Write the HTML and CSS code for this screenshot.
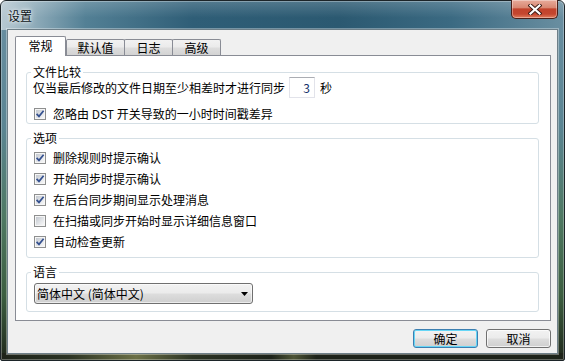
FILE: index.html
```html
<!DOCTYPE html>
<html lang="zh-CN">
<head>
<meta charset="utf-8">
<title>设置</title>
<link rel="stylesheet" href="styles.css">
</head>
<body>
<div class="window">
  <div class="titlebar">
    <span class="title">设置</span>
    <div class="close">
      <svg width="14" height="11" viewBox="0 0 14 11">
        <path d="M2.5 1.5 L11.5 9.5 M11.5 1.5 L2.5 9.5" stroke="#3a1a14" stroke-width="4" stroke-linecap="square" fill="none"/>
        <path d="M2.5 1.5 L11.5 9.5 M11.5 1.5 L2.5 9.5" stroke="#ffffff" stroke-width="2.2" stroke-linecap="square" fill="none"/>
      </svg>
    </div>
  </div>
  <div class="client">
    <div class="tabs">
      <div class="tab active">常规</div>
      <div class="tab t2">默认值</div>
      <div class="tab t3">日志</div>
      <div class="tab t4">高级</div>
    </div>
    <div class="panel">
      <fieldset class="group g1">
        <legend>文件比较</legend>
        <div class="row first">仅当最后修改的文件日期至少相差时才进行同步<span class="num">3</span>秒</div>
        <div class="check c1"><span class="box on"><svg width="8" height="8" viewBox="0 0 8 8"><path d="M0.6 3.8 L3 6.4 L7.6 0.8" stroke="#34508f" stroke-width="1.7" fill="none"/></svg></span>忽略由 DST 开关导致的一小时时间戳差异</div>
      </fieldset>
      <fieldset class="group g2">
        <legend>选项</legend>
        <div class="check first"><span class="box on"><svg width="8" height="8" viewBox="0 0 8 8"><path d="M0.6 3.8 L3 6.4 L7.6 0.8" stroke="#34508f" stroke-width="1.7" fill="none"/></svg></span>删除规则时提示确认</div>
        <div class="check"><span class="box on"><svg width="8" height="8" viewBox="0 0 8 8"><path d="M0.6 3.8 L3 6.4 L7.6 0.8" stroke="#34508f" stroke-width="1.7" fill="none"/></svg></span>开始同步时提示确认</div>
        <div class="check"><span class="box on"><svg width="8" height="8" viewBox="0 0 8 8"><path d="M0.6 3.8 L3 6.4 L7.6 0.8" stroke="#34508f" stroke-width="1.7" fill="none"/></svg></span>在后台同步期间显示处理消息</div>
        <div class="check"><span class="box"></span>在扫描或同步开始时显示详细信息窗口</div>
        <div class="check"><span class="box on"><svg width="8" height="8" viewBox="0 0 8 8"><path d="M0.6 3.8 L3 6.4 L7.6 0.8" stroke="#34508f" stroke-width="1.7" fill="none"/></svg></span>自动检查更新</div>
      </fieldset>
      <fieldset class="group g3">
        <legend>语言</legend>
        <div class="select">
          <span>简体中文 (简体中文)</span>
          <svg width="7" height="4" viewBox="0 0 7 4"><path d="M0 0 H7 L3.5 4 Z" fill="#000"/></svg>
        </div>
      </fieldset>
    </div>
    <div class="buttons">
      <div class="btn default">确定</div>
      <div class="btn">取消</div>
    </div>
  </div>
</div>
</body>
</html>
```

FILE: styles.css
```css
* { box-sizing: border-box; }
html, body { margin: 0; padding: 0; background: #ffffff; }
body {
  font-family: "Noto Sans CJK SC", "Noto Sans", sans-serif;
  font-size: 12px;
  line-height: 14px;
  color: #000;
}

.window {
  width: 565px;
  height: 361px;
  display: flex;
  flex-direction: column;
  padding: 0 6px 6px 6px;
  border: 1px solid #1c2428;
  border-radius: 6px 6px 2px 2px;
  box-shadow: inset 0 0 0 1px rgba(255, 255, 255, 0.3);
  background:
    linear-gradient(to right, #1d2319 0%, #2b3323 12%, #6b7046 24%, #2b3323 34%, #1d2319 48%, #4d5436 52%, #1d2319 56%, #1d2319 100%) bottom / 100% 7px no-repeat,
    linear-gradient(to right, #b8c9d2 0%, #8eabb9 6%, #538095 15%, #2f5e77 34%, #2b5971 60%, #3b6a82 80%, #6a8fa1 100%) top / 100% 29px no-repeat,
    linear-gradient(to bottom, #6b90a3 0%, #5b8593 35%, #4f7963 60%, #3c5e40 82%, #1f281b 100%);
}

.titlebar {
  height: 28px;
  display: flex;
  justify-content: space-between;
  align-items: flex-start;
  background: linear-gradient(to bottom, rgba(255,255,255,0.18), rgba(255,255,255,0) 60%);
  margin: 0 -6px;
  padding: 0 6px;
}
.title {
  padding: 8px 0 0 1px;
  line-height: 14px;
  color: #0c1418;
  text-shadow: 0 0 6px rgba(255,255,255,0.9), 0 0 3px rgba(255,255,255,0.8);
}
.close {
  width: 47px;
  height: 19px;
  margin-top: -1px;
  display: flex;
  align-items: center;
  justify-content: center;
  border: 1px solid #4a1f18;
  border-top: none;
  border-radius: 0 0 5px 5px;
  background: linear-gradient(to bottom, #e8ab9b 0%, #d88873 42%, #c2432c 50%, #c4462f 78%, #e27e5e 100%);
  box-shadow: inset 0 0 0 1px rgba(255,255,255,0.35);
}
.close svg { display: block; }

.client {
  flex: 1;
  display: flex;
  flex-direction: column;
  border: 1px solid #6e7f88;
  box-shadow: 0 0 0 1px rgba(255,255,255,0.35);
  background: #f0f0f0;
  padding: 6px 6px 0 7px;
}

.tabs {
  height: 20px;
  margin-bottom: -1px;
  display: flex;
  align-items: flex-end;
  position: relative;
  z-index: 1;
}
.tab {
  height: 16px;
  margin-bottom: 1px;
  border: 1px solid #898c95;
  border-bottom: none;
  border-radius: 2px 2px 0 0;
  background: linear-gradient(to bottom, #f2f2f2 0%, #ebebeb 45%, #dddddd 55%, #d3d3d3 100%);
  display: flex;
  align-items: center;
  justify-content: center;
  line-height: 14px;
}
.tab.active {
  width: 51px;
  height: 20px;
  margin-bottom: 0;
  background: #ffffff;
  padding-bottom: 1px;
}
.tab.t2 { width: 59px; }
.tab.t3 { width: 49px; margin-left: -1px; }
.tab.t4 { width: 49px; margin-left: -1px; }

.panel {
  width: 536px;
  height: 266px;
  border: 1px solid #898c95;
  background: #ffffff;
  padding: 10px 11px 0 10px;
  display: flex;
  flex-direction: column;
}

.group {
  margin: 0;
  min-width: 0;
  border: 1px solid #d5dfe5;
  border-radius: 3px;
  padding: 0 6px 1px 6px;
}
.group legend {
  padding: 0 2px;
  margin-left: -2px;
  line-height: 12px;
  font-size: 12px;
}
.g2 { margin-top: 8px; padding-bottom: 5px; }
.g3 { margin-top: 8px; padding-bottom: 7px; }

.row {
  height: 21px;
  display: flex;
  align-items: center;
  white-space: nowrap;
}
.row.first { margin-top: -1px; }
.num {
  width: 26px;
  height: 21px;
  margin: 0 5px 0 4px;
  border: 1px solid #e2e3ea;
  border-top-color: #abadb3;
  background: #fff;
  text-align: right;
  padding-right: 4px;
  line-height: 19px;
  color: #12306a;
}

.check {
  height: 21px;
  display: flex;
  align-items: center;
  gap: 7px;
  white-space: nowrap;
}
.check.c1 { margin-top: 7px; height: 17px; }
.g2 .check.first { margin-top: 3px; }

.box {
  width: 12px;
  height: 12px;
  margin-left: 1px;
  flex: none;
  border: 1px solid #8e8f8f;
  padding: 1px;
  background: linear-gradient(135deg, #c3c8cf 0%, #e4e6e9 60%, #f7f7f7 100%) content-box, #f6f6f6;
  display: flex;
  align-items: center;
  justify-content: center;
}
.box svg { display: block; overflow: visible; }

.select {
  width: 219px;
  height: 21px;
  margin-top: 5px;
  margin-left: 1px;
  border: 1px solid #707070;
  border-radius: 3px;
  background: linear-gradient(to bottom, #f2f2f2 0%, #ebebeb 48%, #dddddd 52%, #cfcfcf 100%);
  box-shadow: inset 0 0 0 1px rgba(255,255,255,0.6);
  display: flex;
  align-items: center;
  justify-content: space-between;
  padding: 0 4px 0 2px;
  white-space: nowrap;
}
.select svg { display: block; }

.buttons {
  margin-top: 8px;
  display: flex;
  justify-content: flex-end;
  gap: 8px;
}
.btn {
  width: 65px;
  height: 19px;
  border: 1px solid #707070;
  border-radius: 3px;
  background: linear-gradient(to bottom, #f2f2f2 0%, #ebebeb 48%, #dddddd 52%, #cfcfcf 100%);
  box-shadow: inset 0 0 0 1px rgba(255,255,255,0.7);
  display: flex;
  align-items: center;
  justify-content: center;
  line-height: 14px;
}
.btn.default {
  border-color: #3c7fb1;
  box-shadow: inset 0 0 0 1px #66d6f6;
}
```
